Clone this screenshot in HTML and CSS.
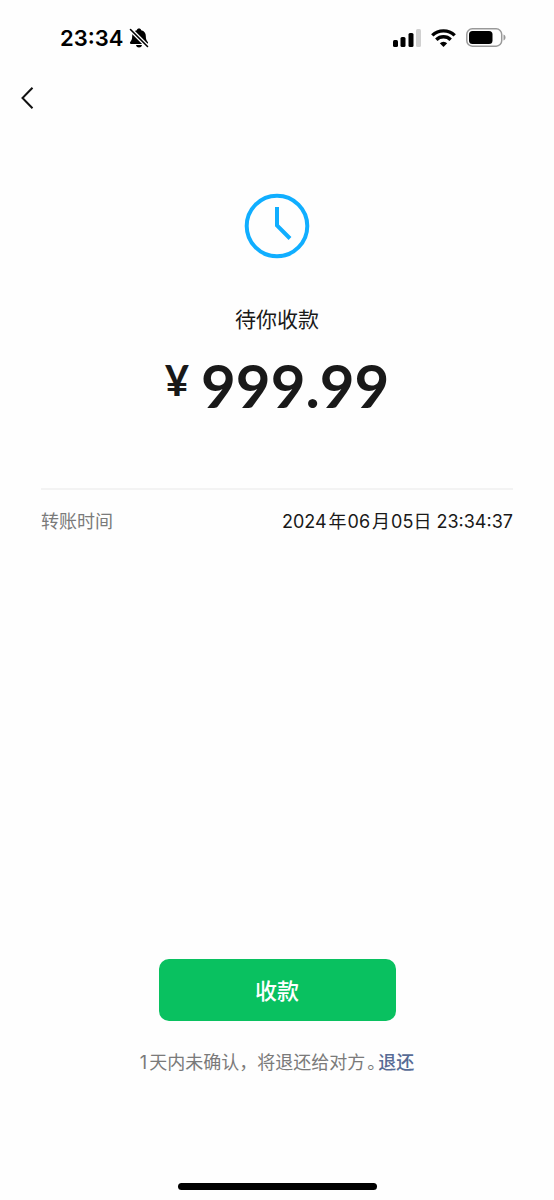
FILE: index.html
```html
<!DOCTYPE html>
<html lang="zh-CN">
<head>
<meta charset="utf-8">
<meta name="viewport" content="width=device-width, initial-scale=1">
<title>待你收款</title>
<link rel="stylesheet" href="styles.css">
</head>
<body>
<div class="screen">
  <header class="status">
    <div class="status-left">
      <time class="clock">23:34</time>
      <svg class="bell" width="20" height="20" viewBox="0 0 20 20" aria-hidden="true">
        <path d="M10 .5c1.200 0 2 .7 2.200 1.700C15.500 3 16.800 5.300 16.800 8c0 3.500.8 4.500 2 6 .6.9.2 2-.9 2H2.100c-1.100 0-1.500-1.100-.9-2 1.200-1.500 2-2.500 2-6 0-2.700 1.300-5 4.600-5.800C8 1.200 8.800.5 10 .5Z"/>
        <path d="M7 17h6c-.3 1.700-1.500 2.500-3 2.500S7.300 18.700 7 17Z"/>
        <path d="M1.500 1.500 18.500 18.500" stroke="#fff" stroke-width="4"/>
        <path d="M1.500 1.500 18.500 18.500" stroke="#000" stroke-width="1.600" stroke-linecap="round"/>
      </svg>
    </div>
    <div class="status-right">
      <svg width="29" height="18" viewBox="0 0 29 18" aria-hidden="true">
        <rect x="1" y="11" width="5" height="7" rx="1.500"/>
        <rect x="8.500" y="8" width="5" height="10" rx="1.500"/>
        <rect x="16.500" y="4" width="5" height="14" rx="1.500"/>
        <rect x="24" y="0" width="5" height="18" rx="1.500" fill="#d0d0d0"/>
      </svg>
      <svg width="25" height="18" viewBox="0 0 25 18" fill="none" stroke="#000" stroke-width="3.400" aria-hidden="true">
        <path d="M1.300 6.400a16 16 0 0 1 22.400 0"/>
        <path d="M5.300 10.700a10.300 10.300 0 0 1 14.400 0"/>
        <path d="M12.500 18 8.800 14.300a5.300 5.300 0 0 1 7.400 0Z" fill="#000" stroke="none"/>
      </svg>
      <svg width="40" height="19" viewBox="0 0 40 19" aria-hidden="true">
        <rect x=".8" y=".8" width="34.900" height="17.400" rx="5.500" fill="none" stroke="#999" stroke-width="1.500"/>
        <rect x="3" y="3" width="23.500" height="13" rx="3.500"/>
        <path d="M37.500 6.500c1.400.4 2 1.600 2 3s-.6 2.600-2 3Z" fill="#999"/>
      </svg>
    </div>
  </header>
  <nav class="nav">
    <button class="back" type="button" aria-label="返回">
      <svg width="14" height="24" viewBox="0 0 14 24" fill="none" stroke="#111" stroke-width="2" aria-hidden="true"><path d="M12.500 1.700 2.500 12l10 10.300"/></svg>
    </button>
  </nav>
  <main class="main">
    <svg class="pending" width="66" height="66" viewBox="0 0 66 66" fill="none" stroke="#10aeff" stroke-width="4" aria-hidden="true">
      <circle cx="33" cy="33" r="30.300"/>
      <path d="M33 14v18.500L46 45.500"/>
    </svg>
    <h1 class="title">待你收款</h1>
    <p class="amount"><span class="currency">¥</span><span>999.99</span></p>
    <dl class="details">
      <dt>转账时间</dt>
      <dd>2024<span class="unit">年</span>06<span class="unit">月</span>05日 23:34:37</dd>
    </dl>
  </main>
  <footer class="footer">
    <button class="accept" type="button">收款</button>
    <p class="note"><span class="days">1</span>天内未确认，将退还给对方<span class="stop">。</span><a class="refund" href="#">退还</a></p>
    <div class="home"></div>
  </footer>
</div>
</body>
</html>
```
FILE: styles.css
```css
* {
  box-sizing: border-box;
}

body {
  margin: 0;
  background: #fefefe;
  color: #191919;
  font-family: Inter, "Noto Sans CJK SC", sans-serif;
}

.screen {
  display: flex;
  flex-direction: column;
  min-height: 100vh;
}

.status {
  display: flex;
  justify-content: space-between;
  align-items: center;
  height: 75px;
  padding: 0 48px 0 60px;
}

.status-left,
.status-right {
  display: flex;
  align-items: center;
}

.status-left {
  gap: 6px;
}

.status-right {
  gap: 10px;
}

.clock {
  color: #000;
  font-size: 22px;
  font-weight: 600;
  line-height: 28px;
}

.nav {
  display: flex;
  align-items: center;
  height: 45px;
  padding: 0 20px;
}

.back {
  display: flex;
  padding: 0;
  border: 0;
  background: none;
}

.main {
  display: flex;
  flex: 1;
  flex-direction: column;
  align-items: center;
  padding: 73px 41px 0;
}

.title {
  margin: 46px 0 0;
  font-size: 21px;
  font-weight: 400;
  line-height: 30px;
}

.amount {
  display: flex;
  align-items: flex-start;
  gap: 12px;
  margin: 14px 0 0;
  font-family: Lato, sans-serif;
  font-size: 60px;
  font-weight: 700;
  line-height: 72px;
}

.currency {
  font-size: 42px;
  line-height: 62px;
}

.details {
  display: flex;
  justify-content: space-between;
  align-self: stretch;
  margin: 67px 0 0;
  padding-top: 18px;
  border-top: 2px solid #f3f3f3;
  font-size: 18px;
  line-height: 28px;
}

.details dt {
  color: #7a7a7a;
}

.details dd {
  margin: 0;
}

.unit {
  padding: 0 1px 0 2px;
}

.footer {
  display: flex;
  flex-direction: column;
  align-items: center;
  padding-bottom: 10px;
}

.accept {
  width: 237px;
  height: 62px;
  padding: 0 0 3px;
  border: 0;
  border-radius: 10px;
  background: #09c160;
  color: #fff;
  font-family: inherit;
  font-size: 22px;
  font-weight: 500;
}

.note {
  margin: 28px 0 106px;
  color: #7a7a7a;
  font-size: 18px;
  line-height: 28px;
}

.days {
  padding-right: 2px;
}

.stop {
  padding: 0 2px;
  font-feature-settings: "halt";
}

.refund {
  color: #576b95;
  font-weight: 500;
  text-decoration: none;
}

.home {
  width: 199px;
  height: 7px;
  border-radius: 4px;
  background: #000;
}
```
